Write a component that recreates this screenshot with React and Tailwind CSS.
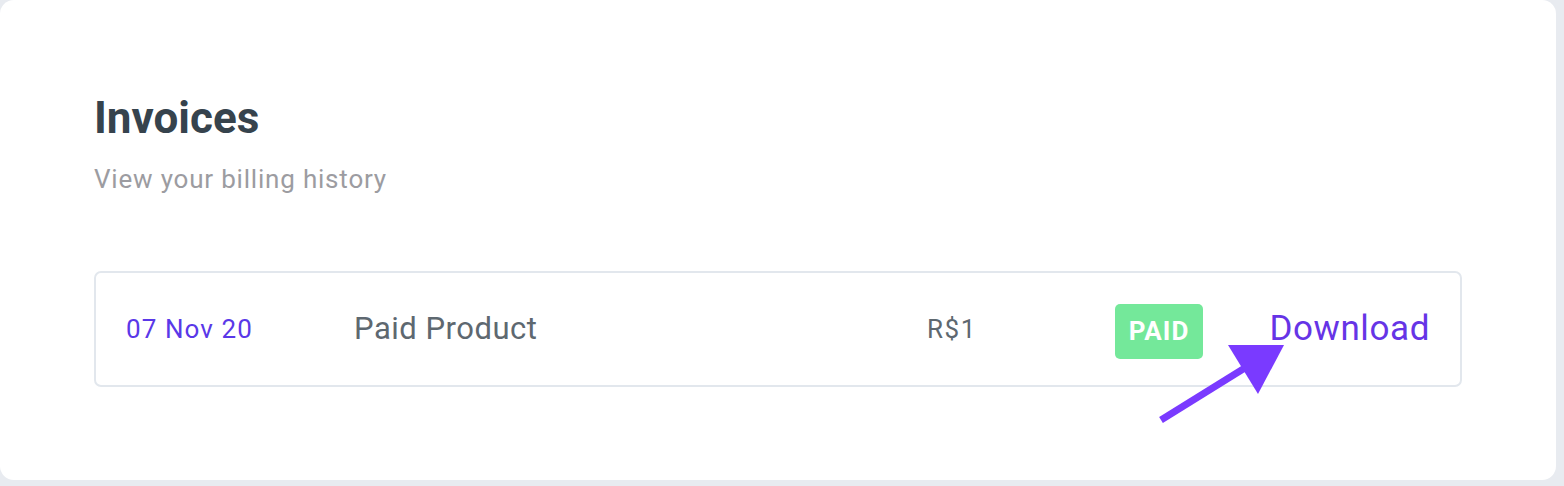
export default function App() {
  return (
    <div className="h-[486px] w-[1564px] bg-[#e8ebf0] font-['Roboto',sans-serif]">
      <div className="relative h-[480px] w-[1556px] rounded-[14px] bg-white pl-[94px] pr-[94px] pt-[91px]">
        <h1 className="text-[44px] font-bold leading-[54px] text-[#36434d]">Invoices</h1>
        <p className="mt-[18px] text-[26px] leading-[32px] tracking-[0.8px] text-[#9c9ca1]">View your billing history</p>

        <div className="mt-[76px] flex h-[116px] items-center rounded-[7px] border-2 border-[#e2e7ed] pl-[30px] pr-[30px]">
          <span className="w-[228px] text-[26px] tracking-[1.1px] text-[#5a38e8]">07 Nov 20</span>
          <span className="w-[573px] text-[31px] tracking-[0.5px] text-[#5e6870]">Paid Product</span>
          <span className="w-[188px] text-[26px] tracking-[1.5px] text-[#5e6870]">R$1</span>
          <span className="mt-[4px] flex h-[55px] w-[88px] items-center justify-center rounded-[5px] bg-[#74e89a] text-[26px] font-bold tracking-[1px] text-white">
            PAID
          </span>
          <a className="ml-auto text-[35px] tracking-[0.6px] text-[#6634e6]" href="#">
            Download
          </a>
        </div>

        {/* annotation arrow */}
        <svg className="absolute left-[1150px] top-[335px]" width="150" height="95" viewBox="1150 335 150 95">
          <line x1="1161" y1="420" x2="1248" y2="366" stroke="#7a3aff" strokeWidth="7" />
          <polygon points="1228,345 1284,345 1258,394" fill="#7a3aff" />
        </svg>
      </div>
    </div>
  )
}
